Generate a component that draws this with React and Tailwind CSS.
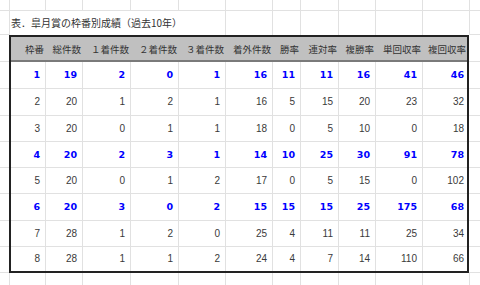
import React from 'react';

const outerW = ['w-[36px]','w-[37px]','w-[48px]','w-[48px]','w-[47px]','w-[47px]','w-[28px]','w-[38px]','w-[37px]','w-[47px]','w-[47px]'];
const tW = ['w-[35px]','w-[37px]','w-[48px]','w-[48px]','w-[47px]','w-[47px]','w-[28px]','w-[38px]','w-[37px]','w-[47px]','w-[44px]'];
const rowH = ['h-[27px]','h-[27px]','h-[26px]','h-[26px]','h-[26px]','h-[27px]','h-[26px]','h-[24px]'];
const sideH = ['h-[27px]','h-[27px]','h-[27px]','h-[26px]','h-[26px]','h-[26px]','h-[27px]','h-[26px]','h-[26px]'];

const headers = ['枠番','総件数','１着件数','２着件数','３着件数','着外件数','勝率','連対率','複勝率','単回収率','複回収率'];
const rows = [
  { b: true, v: [1,19,2,0,1,16,11,11,16,41,46] },
  { b: false, v: [2,20,1,2,1,16,5,15,20,23,32] },
  { b: false, v: [3,20,0,1,1,18,0,5,10,0,18] },
  { b: true, v: [4,20,2,3,1,14,10,25,30,91,78] },
  { b: false, v: [5,20,0,1,2,17,0,5,15,0,102] },
  { b: true, v: [6,20,3,0,2,15,15,15,25,175,68] },
  { b: false, v: [7,28,1,2,0,25,4,11,11,25,34] },
  { b: false, v: [8,28,1,1,2,24,4,7,14,110,66] },
];

function GridRow({ h, bottom = true }) {
  return (
    <div className={`flex ${h}`}>
      <div className={`w-[10px] shrink-0 border-r border-[#e1e1e1] ${bottom ? 'border-b' : ''}`} />
      {outerW.map((w, i) => (
        <div key={i} className={`${w} shrink-0 border-r border-[#e1e1e1] ${bottom ? 'border-b' : ''}`} />
      ))}
      <div className={`flex-1 border-[#e1e1e1] ${bottom ? 'border-b' : ''}`} />
    </div>
  );
}

function Side({ w }) {
  return (
    <div className={`${w} shrink-0 flex flex-col`}>
      {sideH.map((h, i) => (
        <div key={i} className={`${h} border-b border-[#e1e1e1]`} />
      ))}
    </div>
  );
}

export default function App() {
  return (
    <div className="w-[480px] h-[285px] overflow-hidden bg-white flex flex-col">
      <GridRow h="h-[11px] shrink-0" />
      {/* title row */}
      <div className="flex h-[24px] shrink-0">
        <div className="w-[10px] shrink-0 border-r border-b border-[#e1e1e1]" />
        <div className="w-[216px] shrink-0 border-r border-[#e1e1e1] flex items-center pl-[1px] font-['Noto_Sans_CJK_JP',sans-serif] text-[10px] leading-none text-[#333] whitespace-nowrap">
          表．皐月賞の枠番別成績（過去10年）
        </div>
        {outerW.slice(5).map((w, i) => (
          <div key={i} className={`${w} shrink-0 border-r border-[#e1e1e1]`} />
        ))}
        <div className="flex-1 border-b border-[#e1e1e1]" />
      </div>
      {/* table block */}
      <div className="flex shrink-0">
        <Side w="w-[9px]" />
        <div className="w-[460px] shrink-0 border-2 border-[#222]">
          <div className="flex h-[25px] bg-[#c0c0c0] border-b-2 border-[#7a7a7a]">
            {headers.map((t, i) => (
              <div key={i} className={`${tW[i]} shrink-0 flex items-center justify-end pt-[2px] ${i === 10 ? 'pr-[1px]' : 'pr-[2px]'} font-['Noto_Sans_CJK_JP',sans-serif] text-[9.5px] leading-none text-[#333] whitespace-nowrap`}>
                {t}
              </div>
            ))}
          </div>
          {rows.map((r, ri) => (
            <div key={ri} className={`flex ${rowH[ri]} ${ri < 7 ? 'border-b border-[#e1e1e1]' : ''}`}>
              {r.v.map((v, ci) => (
                <div
                  key={ci}
                  className={`${tW[ci]} shrink-0 flex items-center justify-end leading-none ${ci < 10 ? 'border-r border-[#e1e1e1] pr-[5px]' : 'pr-[3px]'} ${r.b ? "font-['DejaVu_Sans',sans-serif] font-bold text-[9.5px] text-[#0000ff]" : "font-['Liberation_Sans',sans-serif] text-[10px] text-[#3a3a3a]"}`}
                >
                  {v}
                </div>
              ))}
            </div>
          ))}
        </div>
        <div className="flex-1 flex flex-col">
          {sideH.map((h, i) => (
            <div key={i} className={`${h} border-b border-[#e1e1e1]`} />
          ))}
        </div>
      </div>
      <GridRow h="flex-1" bottom={false} />
    </div>
  );
}
